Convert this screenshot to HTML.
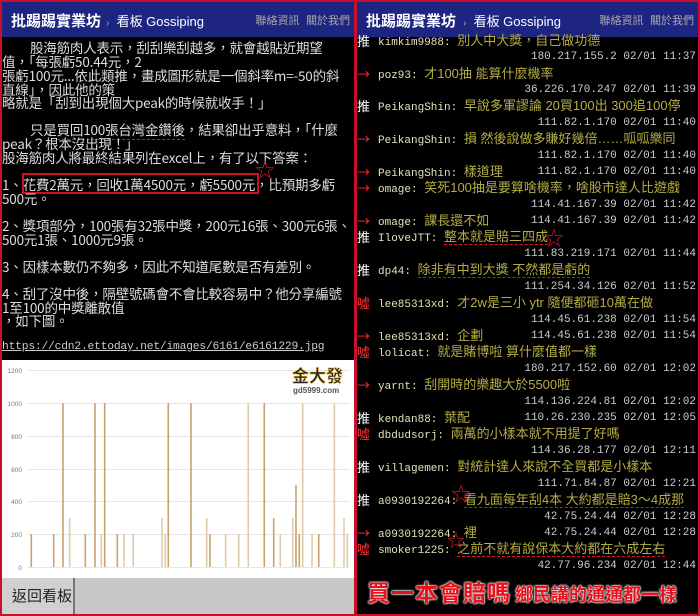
<!DOCTYPE html>
<html><head><meta charset="utf-8">
<style>
*{margin:0;padding:0;box-sizing:border-box}
body{width:700px;height:616px;background:#000;position:relative;overflow:hidden;font-family:"Liberation Sans","Noto Sans CJK TC",sans-serif}
.p{position:absolute;top:0;height:616px;border:2px solid #c8102e;overflow:hidden;background:#000}
.hd{position:absolute;left:0;top:0;right:0;height:35px;background:#1e2580}
.hd .t{position:absolute;left:9px;top:8px;color:#fff;font-size:15px;font-weight:bold;font-family:"Noto Sans CJK TC",sans-serif}
.hd .b{position:absolute;left:106px;top:9px;color:#fff;font-size:13px;font-family:"Liberation Sans","Noto Sans CJK TC",sans-serif}
.hd .r{position:absolute;right:4px;top:10px;color:#aaa;font-size:11px;font-family:"Noto Sans CJK TC",sans-serif;word-spacing:4px}
.l{position:absolute;white-space:nowrap;color:#ddd;font-family:"Noto Sans CJK TC",sans-serif;font-size:13.5px;line-height:16px;letter-spacing:-0.2px}
.r .l{font-size:13px}
.tag{position:absolute;left:0;font-size:13px;line-height:16px;font-family:"Noto Sans CJK TC",sans-serif}
.u{position:absolute;left:21px;font-family:"Liberation Mono",monospace;font-size:11px;color:#e2e2b8;line-height:16px;white-space:nowrap}
.u b{font-weight:normal;color:#b5ad45;font-family:"Liberation Sans","Noto Sans CJK TC",sans-serif;font-size:13px}
.ip{position:absolute;right:2px;font-family:"Liberation Mono",monospace;font-size:11px;color:#ccc;line-height:16px;white-space:nowrap}
.dash{border-bottom:1.5px dashed #e0102a}
</style></head><body>

<div class="p" style="left:0;width:356px">
 <div class="hd"><span class="t">批踢踢實業坊</span><span class="b" style="left:104px"><span style="color:#aaa;font-size:10px">›</span>&nbsp; 看板 Gossiping</span><span class="r">聯絡資訊 關於我們</span></div>
 <div class="l" style="left:28px;top:37px">股海筋肉人表示，刮刮樂刮越多，就會越貼近期望</div>
 <div class="l" style="left:0;top:51px">值，「每張虧50.44元，2</div>
 <div class="l" style="left:0;top:65px">張虧100元...依此類推，畫成圖形就是一個斜率m=-50的斜</div>
 <div class="l" style="left:0;top:79px">直線」，因此他的策</div>
 <div class="l" style="left:0;top:92px">略就是「刮到出現個大peak的時候就收手！」</div>
 <div class="l" style="left:28px;top:119px">只是<span class="dash">買回100張台灣金鑽後</span>，結果卻出乎意料，「什麼</div>
 <div class="l" style="left:0;top:133px">peak？根本沒出現！」</div>
 <div class="l" style="left:0;top:147px">股海筋肉人將最終結果列在excel上，有了以下答案：</div>
 <div class="l" style="left:0;top:174px">1、花費2萬元，回收1萬4500元，虧5500元，比預期多虧</div>
 <div style="position:absolute;left:20px;top:171px;width:237px;height:21px;border:2px solid #d01020"></div>
 <div style="position:absolute;left:253px;top:152px;color:#e0102a;font-size:20px">☆</div>
 <div class="l" style="left:0;top:188px">500元。</div>
 <div class="l" style="left:0;top:215px">2、獎項部分，100張有32張中獎，200元16張、300元6張、</div>
 <div class="l" style="left:0;top:229px">500元1張、1000元9張。</div>
 <div class="l" style="left:0;top:256px">3、因樣本數仍不夠多，因此不知道尾數是否有差別。</div>
 <div class="l" style="left:0;top:283px">4、刮了沒中後，隔壁號碼會不會比較容易中？他分享編號</div>
 <div class="l" style="left:0;top:297px">1至100的中獎離散值</div>
 <div class="l" style="left:0;top:310px">，如下圖。</div>
 <div class="l" style="left:0;top:337px;font-family:'Liberation Mono',monospace;font-size:11.3px;color:#ccc;text-decoration:underline">https://cdn2.ettoday.net/images/6161/e6161229.jpg</div>

 <svg style="position:absolute;left:0;top:358px" width="354" height="218" viewBox="0 358 354 218">
  <rect x="0" y="358" width="354" height="218" fill="#fff"/>
  <g stroke="#e6e6e6" stroke-width="1">
   <line x1="26" y1="368.5" x2="348" y2="368.5"/><line x1="26" y1="401.5" x2="348" y2="401.5"/><line x1="26" y1="434.5" x2="348" y2="434.5"/><line x1="26" y1="467.5" x2="348" y2="467.5"/><line x1="26" y1="499.5" x2="348" y2="499.5"/><line x1="26" y1="532.5" x2="348" y2="532.5"/><line x1="26" y1="565.5" x2="348" y2="565.5"/>
  </g>
  <g font-family="Liberation Sans" font-size="6.5" fill="#777" text-anchor="end">
   <text x="20" y="371">1200</text><text x="20" y="404">1000</text><text x="20" y="437">800</text><text x="20" y="470">600</text><text x="20" y="502">400</text><text x="20" y="535">200</text><text x="20" y="568">0</text>
  </g>
  <g stroke="#c8a26a" stroke-width="1.6">
   <line x1="29.3" y1="565" x2="29.3" y2="532"/><line x1="51.7" y1="565" x2="51.7" y2="532"/><line x1="61" y1="565" x2="61" y2="401"/><line x1="67.7" y1="565" x2="67.7" y2="516" stroke="#e0cba8"/><line x1="83.3" y1="565" x2="83.3" y2="532"/><line x1="93" y1="565" x2="93" y2="401"/><line x1="99.3" y1="565" x2="99.3" y2="532" stroke="#e0cba8"/><line x1="102.7" y1="565" x2="102.7" y2="401"/><line x1="115.3" y1="565" x2="115.3" y2="532"/><line x1="122" y1="565" x2="122" y2="532" stroke="#e0cba8"/><line x1="131.3" y1="565" x2="131.3" y2="532" stroke="#e0cba8"/><line x1="160" y1="565" x2="160" y2="516" stroke="#e0cba8"/><line x1="163.3" y1="565" x2="163.3" y2="532" stroke="#e0cba8"/><line x1="166.3" y1="565" x2="166.3" y2="401"/><line x1="189" y1="565" x2="189" y2="401"/><line x1="204.7" y1="565" x2="204.7" y2="516" stroke="#e0cba8"/><line x1="208" y1="565" x2="208" y2="532"/><line x1="223.7" y1="565" x2="223.7" y2="532" stroke="#e0cba8"/><line x1="236.7" y1="565" x2="236.7" y2="532" stroke="#e0cba8"/><line x1="246.3" y1="565" x2="246.3" y2="401" stroke="#e0cba8"/><line x1="262.3" y1="565" x2="262.3" y2="401"/><line x1="271.7" y1="565" x2="271.7" y2="516"/><line x1="278.3" y1="565" x2="278.3" y2="532" stroke="#e0cba8"/><line x1="290.7" y1="565" x2="290.7" y2="516" stroke="#e0cba8"/><line x1="294" y1="565" x2="294" y2="483"/><line x1="297.3" y1="565" x2="297.3" y2="532"/><line x1="300.7" y1="565" x2="300.7" y2="401" stroke="#e0cba8"/><line x1="310" y1="565" x2="310" y2="532" stroke="#e0cba8"/><line x1="316.7" y1="565" x2="316.7" y2="532"/><line x1="332.3" y1="565" x2="332.3" y2="401" stroke="#e0cba8"/><line x1="342" y1="565" x2="342" y2="516" stroke="#e0cba8"/><line x1="345.3" y1="565" x2="345.3" y2="532" stroke="#e0cba8"/>
  </g>
  <text x="290" y="380" font-family="Noto Sans CJK TC" font-weight="bold" font-size="17" fill="#222" stroke="#f0c040" stroke-width="0.6">金大發</text>
  <text x="291" y="391" font-family="Liberation Sans" font-weight="bold" font-size="8" fill="#555">gd5999.com</text>
 </svg>
 <div style="position:absolute;left:0;top:576px;width:354px;height:36px;background:#c8c8c8"></div>
 <div style="position:absolute;left:0;top:576px;width:73px;height:36px;background:#d0d0d0;border-right:2px solid #777"></div>
 <div style="position:absolute;left:10px;top:583px;font-size:15px;color:#222;font-family:'Noto Sans CJK TC',sans-serif">返回看板</div>
</div>

<div class="p r" style="left:355px;width:345px">
 <div class="hd"><span class="t">批踢踢實業坊</span><span class="b"><span style="color:#aaa;font-size:10px">›</span>&nbsp; 看板 Gossiping</span><span class="r">聯絡資訊 關於我們</span></div>
</div>
<div id="rc" style="position:absolute;left:357px;top:0;width:341px;height:616px">
 <span class="tag" style="top:33px;color:#fff">推</span><span class="u" style="top:33px">kimkim9988: <b>別人中大獎，自己做功德</b></span>
 <span class="ip" style="top:49px">180.217.155.2 02/01 11:37</span>
 <span class="tag" style="top:66px;color:#f33">→</span><span class="u" style="top:66px">poz93: <b>才100抽 能算什麼機率</b></span>
 <span class="ip" style="top:82px">36.226.170.247 02/01 11:39</span>
 <span class="tag" style="top:98px;color:#fff">推</span><span class="u" style="top:98px">PeikangShin: <b>早說多軍謬論 20買100出 300追100停</b></span>
 <span class="ip" style="top:115px">111.82.1.170 02/01 11:40</span>
 <span class="tag" style="top:131px;color:#f33">→</span><span class="u" style="top:131px">PeikangShin: <b>損 然後說做多賺好幾倍……呱呱樂同</b></span>
 <span class="ip" style="top:148px">111.82.1.170 02/01 11:40</span>
 <span class="tag" style="top:164px;color:#f33">→</span><span class="u" style="top:164px">PeikangShin: <b>樣道理</b></span><span class="ip" style="top:164px">111.82.1.170 02/01 11:40</span>
 <span class="tag" style="top:180px;color:#f33">→</span><span class="u" style="top:180px">omage: <b>笑死100抽是要算啥機率，啥股市達人比遊戲</b></span>
 <span class="ip" style="top:197px">114.41.167.39 02/01 11:42</span>
 <span class="tag" style="top:213px;color:#f33">→</span><span class="u" style="top:213px">omage: <b>課長還不如</b></span><span class="ip" style="top:213px">114.41.167.39 02/01 11:42</span>
 <span class="tag" style="top:229px;color:#fff">推</span><span class="u" style="top:229px">IloveJTT: <b class="dash">整本就是賠三四成</b></span>
 <span style="position:absolute;left:187px;top:222px;color:#e0102a;font-size:20px">☆</span>
 <span class="ip" style="top:246px">111.83.219.171 02/01 11:44</span>
 <span class="tag" style="top:262px;color:#fff">推</span><span class="u" style="top:262px">dp44: <b class="dash">除非有中到大獎 不然都是虧的</b></span>
 <span class="ip" style="top:279px">111.254.34.126 02/01 11:52</span>
 <span class="tag" style="top:295px;color:#f33">噓</span><span class="u" style="top:295px">lee85313xd: <b>才2w是三小 ytr 隨便都砸10萬在做</b></span>
 <span class="ip" style="top:312px">114.45.61.238 02/01 11:54</span>
 <span class="tag" style="top:328px;color:#f33">→</span><span class="u" style="top:328px">lee85313xd: <b>企劃</b></span><span class="ip" style="top:328px">114.45.61.238 02/01 11:54</span>
 <span class="tag" style="top:344px;color:#f33">噓</span><span class="u" style="top:344px">lolicat: <b>就是賭博啦 算什麼值都一樣</b></span>
 <span class="ip" style="top:361px">180.217.152.60 02/01 12:02</span>
 <span class="tag" style="top:377px;color:#f33">→</span><span class="u" style="top:377px">yarnt: <b>刮開時的樂趣大於5500啦</b></span>
 <span class="ip" style="top:394px">114.136.224.81 02/01 12:02</span>
 <span class="tag" style="top:410px;color:#fff">推</span><span class="u" style="top:410px">kendan88: <b>葉配</b></span><span class="ip" style="top:410px">110.26.230.235 02/01 12:05</span>
 <span class="tag" style="top:426px;color:#f33">噓</span><span class="u" style="top:426px">dbdudsorj: <b>兩萬的小樣本就不用提了好嗎</b></span>
 <span class="ip" style="top:443px">114.36.28.177 02/01 12:11</span>
 <span class="tag" style="top:459px;color:#fff">推</span><span class="u" style="top:459px">villagemen: <b>對統計達人來說不全買都是小樣本</b></span>
 <span class="ip" style="top:476px">111.71.84.87 02/01 12:21</span>
 <span class="tag" style="top:492px;color:#fff">推</span><span class="u" style="top:492px">a0930192264: <b class="dash">看九面每年刮4本 大約都是賠3～4成那</b></span>
 <span style="position:absolute;left:94px;top:478px;color:#e0102a;font-size:20px">☆</span>
 <span class="ip" style="top:509px">42.75.24.44 02/01 12:28</span>
 <span class="tag" style="top:525px;color:#f33">→</span><span class="u" style="top:525px">a0930192264: <b>裡</b></span><span class="ip" style="top:525px">42.75.24.44 02/01 12:28</span>
 <span style="position:absolute;left:90px;top:527px;color:#e0102a;font-size:18px">☆</span>
 <span class="tag" style="top:541px;color:#f33">噓</span><span class="u" style="top:541px">smoker1225: <b class="dash">之前不就有說保本大約都在六成左右</b></span>
 <span class="ip" style="top:558px">42.77.96.234 02/01 12:44</span>
 <div style="position:absolute;left:10px;top:574px;white-space:nowrap;font-family:'Noto Sans CJK TC',sans-serif;font-weight:bold;color:#e8101a;text-shadow:0 0 2px #fff,0 0 2px #fff,0 0 1px #fff">
  <span style="font-size:23px;letter-spacing:1px">買一本會賠嗎</span><span style="font-size:18px;margin-left:4px">鄉民講的通通都一樣</span>
 </div>
</div>
</body></html>
